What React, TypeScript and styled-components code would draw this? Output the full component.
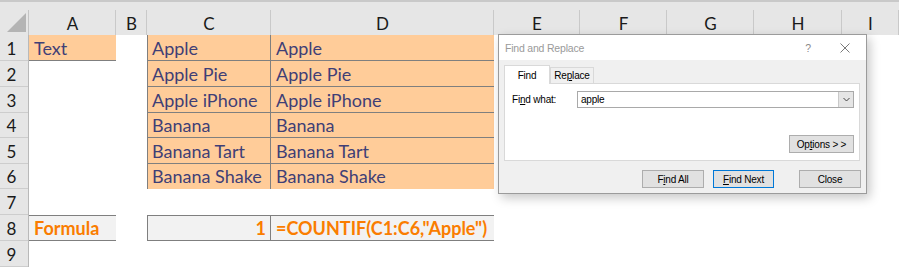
import React from 'react'
import styled, { createGlobalStyle } from 'styled-components'

const GlobalStyle = createGlobalStyle`
  html, body {
    margin: 0;
    padding: 0;
    background: #ffffff;
    overflow: hidden;
  }
`

const Page = styled.div`
  position: relative;
  width: 899px;
  height: 270px;
  overflow: hidden;
  background: #ffffff;
`

const Sheet = styled.div`
  display: grid;
  grid-template-columns: 29px 87px 31px 124px 223px 86px 87px 87px 88px 1fr;
  grid-template-rows: 10px 25px 26px 26px 26px 25px 26px 25px 26px 26px 26px;
  font-family: Lato, 'Liberation Sans', sans-serif;
`

const TopStrip = styled.div`
  grid-column: 1 / -1;
  background: #e6e6e6;
  border-top: 2px solid #c9c9c9;
  box-sizing: border-box;
`

const Corner = styled.div`
  background: #e6e6e6;
  box-shadow: inset -1px 0 0 #c4c4c4;
  display: flex;
  align-items: flex-end;
  justify-content: flex-end;
  padding: 0 3px 3px 0;
`

const ColHead = styled.div`
  background: #e6e6e6;
  box-shadow: inset -1px 0 0 #c9c9c9;
  display: flex;
  align-items: center;
  justify-content: center;
  font-size: 17px;
  color: #1a1a1a;
  padding-top: 2px;
`

const RowHead = styled.div`
  background: #e6e6e6;
  box-shadow: inset -1px 0 0 #b9b9b9, inset 0 -1px 0 #cdcdcd;
  display: flex;
  align-items: flex-end;
  justify-content: center;
  padding: 0 6px 4px 0;
  font-size: 17px;
  line-height: 17px;
  color: #1a1a1a;
`

type Fill = 'input' | 'calc' | 'none'

const fills: Record<Fill, string> = {
  input: '#ffcc99',
  calc: '#f2f2f2',
  none: '#ffffff',
}

const line = '#7f7f7f'

const edgeShadow = (edges: string) => {
  const parts: string[] = []
  if (edges.includes('t')) parts.push(`inset 0 1px 0 ${line}`)
  if (edges.includes('r')) parts.push(`inset -1px 0 0 ${line}`)
  if (edges.includes('b')) parts.push(`inset 0 -1px 0 ${line}`)
  if (edges.includes('l')) parts.push(`inset 1px 0 0 ${line}`)
  return parts.length ? parts.join(', ') : 'none'
}

const Cell = styled.div<{ $fill: Fill; $edges: string; $right?: boolean }>`
  background: ${(p) => fills[p.$fill]};
  box-shadow: ${(p) => edgeShadow(p.$edges)};
  display: flex;
  align-items: flex-end;
  justify-content: ${(p) => (p.$right ? 'flex-end' : 'flex-start')};
  padding: 0 5px 4px 5px;
  font-size: 18px;
  line-height: 18px;
  white-space: nowrap;
  color: ${(p) => (p.$fill === 'calc' ? '#fa7d00' : '#3f3f76')};
  font-weight: ${(p) => (p.$fill === 'calc' ? 700 : 400)};
`

type CellData = { text: string; fill: Fill; edges: string; right?: boolean }

const cells: Record<string, CellData> = {
  A1: { text: 'Text', fill: 'input', edges: 'b' },
  C1: { text: 'Apple', fill: 'input', edges: 'lrb' },
  D1: { text: 'Apple', fill: 'input', edges: 'b' },
  C2: { text: 'Apple Pie', fill: 'input', edges: 'lrb' },
  D2: { text: 'Apple Pie', fill: 'input', edges: 'b' },
  C3: { text: 'Apple iPhone', fill: 'input', edges: 'lrb' },
  D3: { text: 'Apple iPhone', fill: 'input', edges: 'b' },
  C4: { text: 'Banana', fill: 'input', edges: 'lrb' },
  D4: { text: 'Banana', fill: 'input', edges: 'b' },
  C5: { text: 'Banana Tart', fill: 'input', edges: 'lrb' },
  D5: { text: 'Banana Tart', fill: 'input', edges: 'b' },
  C6: { text: 'Banana Shake', fill: 'input', edges: 'lr' },
  D6: { text: 'Banana Shake', fill: 'input', edges: '' },
  A8: { text: 'Formula', fill: 'calc', edges: 'tb' },
  C8: { text: '1', fill: 'calc', edges: 'ltrb', right: true },
  D8: { text: '=COUNTIF(C1:C6,"Apple")', fill: 'calc', edges: 'tb' },
}

const columns = ['A', 'B', 'C', 'D', 'E', 'F', 'G', 'H', 'I']
const rows = [1, 2, 3, 4, 5, 6, 7, 8, 9]

/* ---------- Find and Replace dialog ---------- */

const Dialog = styled.div`
  position: absolute;
  left: 498px;
  top: 34px;
  width: 369px;
  height: 160px;
  box-sizing: border-box;
  border: 1px solid #9b9b9b;
  background: #f0f0f0;
  box-shadow: 3px 4px 10px rgba(0, 0, 0, 0.22);
  display: flex;
  flex-direction: column;
  font-family: 'Liberation Sans', Arial, sans-serif;
  font-size: 10px;
  letter-spacing: -0.2px;
  color: #000000;
`

const TitleBar = styled.div`
  height: 25px;
  background: #ffffff;
  display: flex;
  align-items: center;
  padding: 0 14px 0 6px;
  color: #9a9a9a;
  font-size: 10.5px;
`

const TitleText = styled.span`
  flex: 1;
`

const TitleButton = styled.span`
  width: 14px;
  display: flex;
  justify-content: center;
  color: #8a8a8a;
  margin-left: 23px;
`

const Body = styled.div`
  flex: 1;
  display: flex;
  flex-direction: column;
  padding: 5px;
`

const Tabs = styled.div`
  display: flex;
  align-items: flex-end;
  height: 18px;
`

const Tab = styled.div<{ $active?: boolean }>`
  height: ${(p) => (p.$active ? '19px' : '16px')};
  box-sizing: border-box;
  border: 1px solid #d9d9d9;
  border-bottom: none;
  background: ${(p) => (p.$active ? '#ffffff' : '#f0f0f0')};
  display: flex;
  align-items: center;
  justify-content: center;
  width: ${(p) => (p.$active ? '46px' : '44px')};
  margin-bottom: ${(p) => (p.$active ? '-1px' : '0')};
  position: relative;
`

const Panel = styled.div`
  width: 356px;
  height: 78px;
  box-sizing: border-box;
  border: 1px solid #d9d9d9;
  background: #ffffff;
  display: flex;
  flex-direction: column;
  justify-content: space-between;
  padding: 7px 5px 7px 7px;
`

const FieldRow = styled.div`
  display: flex;
  align-items: center;
`

const Label = styled.span`
  width: 65px;
`

const Combo = styled.div`
  flex: 1;
  height: 17px;
  box-sizing: border-box;
  border: 1px solid #a9a9a9;
  display: flex;
  align-items: stretch;
`

const ComboText = styled.span`
  flex: 1;
  padding-left: 3px;
  display: flex;
  align-items: center;
`

const ComboArrow = styled.span`
  width: 14px;
  background: #e5e5e5;
  border-left: 1px solid #c9c9c9;
  display: flex;
  align-items: center;
  justify-content: center;
`

const OptionsRow = styled.div`
  display: flex;
  justify-content: flex-end;
`

const Btn = styled.div<{ $width: number; $focus?: boolean }>`
  width: ${(p) => p.$width}px;
  height: 18px;
  box-sizing: border-box;
  border: 1px solid ${(p) => (p.$focus ? '#0078d7' : '#adadad')};
  background: #e1e1e1;
  display: flex;
  align-items: center;
  justify-content: center;
`

const Footer = styled.div`
  display: flex;
  justify-content: flex-end;
  margin-top: 9px;
  gap: 9px;
`

const CloseGap = styled.span`
  width: 7px;
`

const Chevron = () => (
  <svg width="7" height="5" viewBox="0 0 7 5">
    <path d="M0.5 1 L3.5 4 L6.5 1" fill="none" stroke="#444" strokeWidth="1" />
  </svg>
)

const CloseIcon = () => (
  <svg width="10" height="10" viewBox="0 0 10 10">
    <path d="M0.5 0.5 L9.5 9.5 M9.5 0.5 L0.5 9.5" stroke="#7a7a7a" strokeWidth="1" />
  </svg>
)

const CornerMark = () => (
  <svg width="19" height="19" viewBox="0 0 19 19">
    <polygon points="19,0 19,19 0,19" fill="#b4b4b4" />
  </svg>
)

const FindDialog = () => (
  <Dialog>
    <TitleBar>
      <TitleText>Find and Replace</TitleText>
      <TitleButton>?</TitleButton>
      <TitleButton>
        <CloseIcon />
      </TitleButton>
    </TitleBar>
    <Body>
      <Tabs>
        <Tab $active>Find</Tab>
        <Tab>
          <span>
            Re<u>p</u>lace
          </span>
        </Tab>
      </Tabs>
      <Panel>
        <FieldRow>
          <Label>
            Fi<u>n</u>d what:
          </Label>
          <Combo>
            <ComboText>apple</ComboText>
            <ComboArrow>
              <Chevron />
            </ComboArrow>
          </Combo>
        </FieldRow>
        <OptionsRow>
          <Btn $width={65}>
            <span>
              Op<u>t</u>ions &gt; &gt;
            </span>
          </Btn>
        </OptionsRow>
      </Panel>
      <Footer>
        <Btn $width={62}>
          <span>
            F<u>i</u>nd All
          </span>
        </Btn>
        <Btn $width={61} $focus>
          <span>
            <u>F</u>ind Next
          </span>
        </Btn>
        <CloseGap />
        <Btn $width={62}>Close</Btn>
      </Footer>
    </Body>
  </Dialog>
)

const App = () => {
  return (
    <Page>
      <GlobalStyle />
      <Sheet>
        <TopStrip />
        <Corner>
          <CornerMark />
        </Corner>
        {columns.map((c) => (
          <ColHead key={c}>{c}</ColHead>
        ))}
        {rows.map((r) => (
          <React.Fragment key={r}>
            <RowHead>{r}</RowHead>
            {columns.map((c) => {
              const d = cells[`${c}${r}`]
              return d ? (
                <Cell key={c} $fill={d.fill} $edges={d.edges} $right={d.right}>
                  {d.text}
                </Cell>
              ) : (
                <Cell key={c} $fill="none" $edges="" />
              )
            })}
          </React.Fragment>
        ))}
      </Sheet>
      <FindDialog />
    </Page>
  )
}

export default App
